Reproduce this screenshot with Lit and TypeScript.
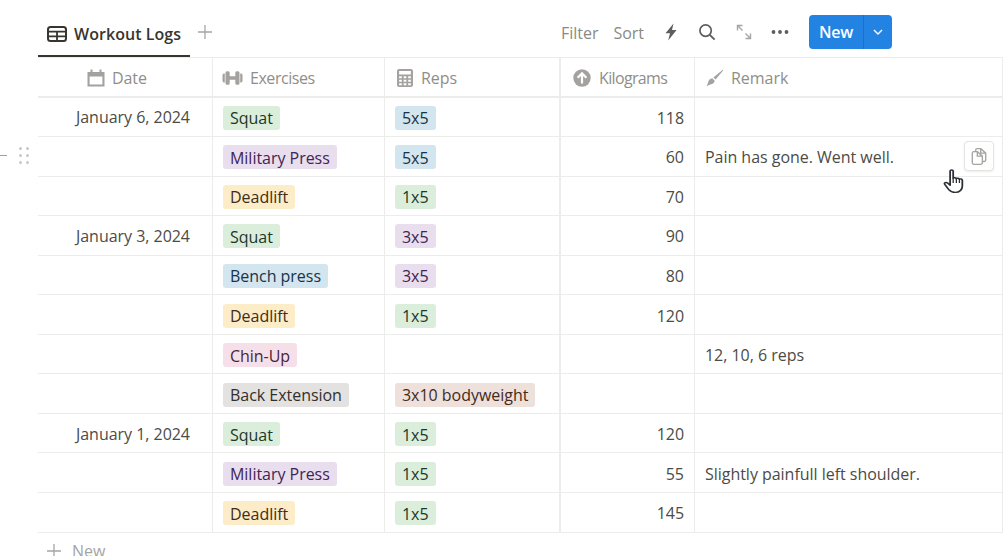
import { LitElement, html, css, svg } from "lit";
import { customElement } from "lit/decorators.js";

type Tag = [string, string];
const G = "green", P = "purple", Y = "yellow", B = "blue", K = "pink", R = "gray", N = "brown";
const rows: [string, Tag, Tag | null, string, string][] = [
  ["January 6, 2024", ["Squat", G], ["5x5", B], "118", ""],
  ["", ["Military Press", P], ["5x5", B], "60", "Pain has gone. Went well."],
  ["", ["Deadlift", Y], ["1x5", G], "70", ""],
  ["January 3, 2024", ["Squat", G], ["3x5", P], "90", ""],
  ["", ["Bench press", B], ["3x5", P], "80", ""],
  ["", ["Deadlift", Y], ["1x5", G], "120", ""],
  ["", ["Chin-Up", K], null, "", "12, 10, 6 reps"],
  ["", ["Back Extension", R], ["3x10 bodyweight", N], "", ""],
  ["January 1, 2024", ["Squat", G], ["1x5", G], "120", ""],
  ["", ["Military Press", P], ["1x5", G], "55", "Slightly painfull left shoulder."],
  ["", ["Deadlift", Y], ["1x5", G], "145", ""],
];

const icons = {
  table: svg`<svg class="ic tabic" viewBox="0 0 20 16"><rect x="1" y="1" width="18" height="14" rx="2.5" fill="none" stroke="currentColor" stroke-width="2"/><path d="M1 5.6H19M1 10.4H19M10 5.6V15" fill="none" stroke="currentColor" stroke-width="1.8"/></svg>`,
  plus: svg`<svg class="ic" width="16" height="16" viewBox="0 0 16 16"><path d="M8 1V15M1 8H15" stroke="currentColor" stroke-width="1.3" fill="none"/></svg>`,
  bolt: svg`<svg class="ic" width="14" height="18" viewBox="0 0 14 18"><path d="M9.5 0.5 1.5 10.2H6L4.2 17.5 12.6 7H8Z" fill="currentColor"/></svg>`,
  search: svg`<svg class="ic" width="18" height="18" viewBox="0 0 18 18"><circle cx="7.6" cy="7.6" r="5.7" fill="none" stroke="currentColor" stroke-width="1.7"/><path d="M11.8 11.8 16.6 16.6" stroke="currentColor" stroke-width="1.9" fill="none"/></svg>`,
  expand: svg`<svg class="ic" width="16" height="16" viewBox="0 0 16 16"><path d="M1.5 6.5V1.5H6.5M1.5 1.5 6.5 6.5M14.5 9.5V14.5H9.5M14.5 14.5 9.5 9.5" stroke="currentColor" stroke-width="1.4" fill="none"/></svg>`,
  more: svg`<svg class="ic" width="18" height="6" viewBox="0 0 18 6"><circle cx="2.5" cy="3" r="1.9" fill="currentColor"/><circle cx="9" cy="3" r="1.9" fill="currentColor"/><circle cx="15.5" cy="3" r="1.9" fill="currentColor"/></svg>`,
  chevron: svg`<svg class="ic" width="10" height="6" viewBox="0 0 10 6"><path d="M1 1 5 5 9 1" stroke="currentColor" stroke-width="1.4" fill="none"/></svg>`,
  calendar: svg`<svg class="ic" width="18" height="18" viewBox="0 0 18 18"><path fill-rule="evenodd" d="M0.5 3H3.5V0.5H5.5V3H12.5V0.5H14.5V3H17.5V17.5H0.5ZM2.6 7.6V15.4H15.4V7.6Z" fill="currentColor"/></svg>`,
  dumbbell: svg`<svg class="ic" width="21" height="16" viewBox="0 0 21 14" preserveAspectRatio="none"><path d="M0.5 4.5Q0.5 3 1.8 3H2.8V11H1.8Q0.5 11 0.5 9.5ZM3.5 2.5Q3.5 1 5 1H6.2Q7.7 1 7.7 2.5V5.4H13.3V2.5Q13.3 1 14.8 1H16Q17.5 1 17.5 2.5V11.5Q17.5 13 16 13H14.8Q13.3 13 13.3 11.5V8.6H7.7V11.5Q7.7 13 6.2 13H5Q3.5 13 3.5 11.5ZM18.2 3H19.2Q20.5 3 20.5 4.5V9.5Q20.5 11 19.2 11H18.2Z" fill="currentColor"/></svg>`,
  calc: svg`<svg class="ic" width="16" height="18" viewBox="0 0 15 18" preserveAspectRatio="none"><path fill-rule="evenodd" d="M2 0H13Q15 0 15 2V16Q15 18 13 18H2Q0 18 0 16V2Q0 0 2 0ZM2 2V5.5H13V2ZM2 7.2V9.2H4.5V7.2ZM6.2 7.2V9.2H8.8V7.2ZM10.5 7.2V9.2H13V7.2ZM2 10.7V12.7H4.5V10.7ZM6.2 10.7V12.7H8.8V10.7ZM10.5 10.7V12.7H13V10.7ZM2 14.2V16.2H4.5V14.2ZM6.2 14.2V16.2H8.8V14.2ZM10.5 14.2V16.2H13V14.2Z" fill="currentColor"/></svg>`,
  up: svg`<svg class="ic" width="18" height="18" viewBox="0 0 18 18"><circle cx="9" cy="9" r="8.7" fill="currentColor"/><path d="M9 14.5V4.5M4.6 8.8 9 4.4 13.4 8.8" stroke="#fff" stroke-width="2.2" fill="none"/></svg>`,
  brush: svg`<svg class="ic" width="18" height="18" viewBox="0 0 18 18"><path d="M16.8 0.8 17.3 1.3 9.6 10.6 7.4 8.4ZM6.3 9.3 8.7 11.7Q8.3 14.6 5.2 15.2 3 15.7 0.8 17.2 1.5 15.2 2.1 13.3 3 9.8 6.3 9.3Z" fill="currentColor"/></svg>`,
  copy: svg`<svg class="ic" width="18" height="19" viewBox="0 0 16 17"><path d="M5 4V2.8Q5 1.5 6.3 1.5H9.7L14 5.5V11.7Q14 13 12.7 13H11.5M2 5.5Q2 4.2 3.3 4.2H6.7L11 8.2V14.2Q11 15.5 9.7 15.5H3.3Q2 15.5 2 14.2ZM6.5 4.2V8.2H11M9.5 1.5V5.5H14" stroke="currentColor" stroke-width="1.2" fill="none"/></svg>`,
  hand: svg`<svg class="hand" width="21" height="25" viewBox="0 0 16.5 25" preserveAspectRatio="none"><path d="M5.6 2.1C5.6 0.6 8 0.6 8 2.1V9.4C8.3 8.4 10.3 8.4 10.5 9.8 10.8 8.9 12.7 9 12.9 10.4 13.3 9.6 15.2 9.8 15.2 11.4V17C15.2 20.4 13.2 23.4 9.6 23.4 6.8 23.4 5.5 22 4.4 20.3L1.4 15.4C0.6 14 2.3 12.7 3.6 14L5.6 16.2Z" fill="#fff" stroke="#2b2f36" stroke-width="1.4" stroke-linejoin="round"/><path d="M8 9.4V14M10.5 9.8V14M12.9 10.4V14" stroke="#2b2f36" stroke-width="1" fill="none"/></svg>`,
};

const head = [
  ["Date", icons.calendar, "date"],
  ["Exercises", icons.dumbbell, "ex"],
  ["Reps", icons.calc, "reps"],
  ["Kilograms", icons.up, "kg"],
  ["Remark", icons.brush, "rem"],
] as const;

@customElement("app-root")
export class AppRoot extends LitElement {
  static styles = css`
    :host {
      display: block;
      width: 1005px;
      height: 556px;
      overflow: hidden;
      position: relative;
      background: #fff;
      font-family: "Open Sans", "Noto Sans", sans-serif;
      font-size: 16px;
      color: #37352f;
      letter-spacing: -0.03px;
    }
    .ic { display: block; flex: none; }
    .tabs {
      height: 57px;
      margin-left: 38px;
      display: flex;
      align-items: flex-end;
      box-sizing: border-box;
    }
    .tab {
      width: 152px;
      height: 47px;
      box-sizing: border-box;
      border-bottom: 2px solid #37352f;
      display: flex;
      align-items: center;
      gap: 7px;
      padding: 2px 0 0 9px;
      font-weight: 600;
      font-size: 16px;
      letter-spacing: 0.05px;
      white-space: nowrap;
    }
    .tabic { width: 20px; height: 16px; }
    .add { color: #a5a5a2; margin: 0 0 16px 7px; padding-bottom: 1px; }
    .spacer { flex: 1; }
    .tools {
      display: flex;
      align-items: center;
      height: 34px;
      margin: 0 113px 8px 0;
      color: #8a8983;
    }
    .tool { display: flex; align-items: center; }
    .filter { margin-right: 15px; padding-top: 1px; }
    .sort { margin-right: 20px; padding-top: 1px; }
    .bolt { color: #5f5e5a; margin-right: 20px; }
    .search { color: #5f5e5a; margin-right: 20px; }
    .expand { color: #a6a5a1; margin-right: 19px; }
    .more { color: #5f5e5a; margin-right: 20px; }
    .new {
      display: flex;
      width: 83px;
      height: 34px;
      border-radius: 4px;
      background: #2383e2;
      color: #fff;
      font-weight: 600;
      letter-spacing: -0.3px;
      overflow: hidden;
    }
    .new span { display: flex; align-items: center; justify-content: center; }
    .new .label { width: 54px; border-right: 1px solid #1c6fc2; }
    .new .drop { flex: 1; }
    .table {
      margin-left: 38px;
      display: grid;
      grid-template-columns: 175px 172px 176px 134px 308px;
      grid-template-rows: 39.5px repeat(11, 39.55px);
      width: 965px;
      border-top: 1px solid #ececeb;
    }
    .c {
      box-sizing: border-box;
      border-right: 1px solid #ececeb;
      border-bottom: 1px solid #ececeb;
      display: flex;
      align-items: center;
      padding: 2px 9px 0 10px;
      white-space: nowrap;
      min-width: 0;
      color: #4c4b45;
    }
    .h { color: #8f8e89; gap: 8px; border-bottom-width: 2px; padding-top: 2px; padding-bottom: 0; }
    .h .ic { color: #a3a29e; }
    .h.date { justify-content: flex-end; padding-right: 65px; gap: 7px; }
    .h.ex { padding-left: 9px; gap: 7px; letter-spacing: -0.45px; }
    .h.reps { padding-left: 12px; gap: 8px; border-right-width: 2px; }
    .h.kg { padding-left: 12px; gap: 8px; letter-spacing: -0.65px; }
    .h.rem { padding-left: 11px; gap: 7px; }
    .date-c { justify-content: flex-end; padding-right: 22px; padding-top: 1px; }
    .num { justify-content: flex-end; padding-right: 10px; }
    .reps-c { border-right-width: 2px; }
    .tag {
      display: inline-flex;
      align-items: center;
      box-sizing: border-box;
      height: 24px;
      padding: 1px 7px 0;
      border-radius: 3px;
    }
    .green { background: #dbeddb; color: #1c3829; }
    .purple { background: #e8deee; color: #412454; }
    .yellow { background: #fdecc8; color: #402c1b; }
    .blue { background: #d3e5ef; color: #183347; }
    .pink { background: #f5e0e9; color: #4c2337; }
    .gray { background: #e3e2e0; color: #32302c; }
    .brown { background: #eee0da; color: #442a1e; }
    .addrow {
      margin-left: 46px;
      margin-top: 7px;
      display: flex;
      align-items: center;
      gap: 10px;
      color: #a5a5a2;
    }
    .copy {
      position: absolute;
      left: 964px;
      top: 141px;
      width: 30px;
      height: 30px;
      box-sizing: border-box;
      background: #fff;
      border: 1px solid #e4e4e2;
      border-radius: 4px;
      display: flex;
      align-items: center;
      justify-content: center;
      color: #a5a5a2;
      box-shadow: 0 1px 2px rgba(15, 15, 15, 0.08);
    }
    .hand { position: absolute; left: 943px; top: 169px; }
    .grip {
      position: absolute;
      left: 19px;
      top: 147px;
      width: 10px;
      height: 17px;
      display: grid;
      grid-template-columns: 3px 3px;
      grid-auto-rows: 3px;
      justify-content: space-between;
      align-content: space-between;
    }
    .grip i { background: #c8c8c5; border-radius: 50%; }
    .dash { position: absolute; left: 0; top: 155px; width: 7px; height: 1px; background: #9f9f9c; }
  `;

  render() {
    return html`
      <div class="tabs">
        <div class="tab">${icons.table}<span>Workout Logs</span></div>
        <div class="add">${icons.plus}</div>
        <div class="spacer"></div>
        <div class="tools">
          <span class="tool filter">Filter</span>
          <span class="tool sort">Sort</span>
          <span class="tool bolt">${icons.bolt}</span>
          <span class="tool search">${icons.search}</span>
          <span class="tool expand">${icons.expand}</span>
          <span class="tool more">${icons.more}</span>
          <div class="new"><span class="label">New</span><span class="drop">${icons.chevron}</span></div>
        </div>
      </div>
      <div class="table">
        ${head.map(([t, i, c]) => html`<div class="c h ${c}">${i}<span>${t}</span></div>`)}
        ${rows.map(
          ([d, e, r, k, m]) => html`
            <div class="c date-c">${d}</div>
            <div class="c"><span class="tag ${e[1]}">${e[0]}</span></div>
            <div class="c reps-c">${r ? html`<span class="tag ${r[1]}">${r[0]}</span>` : ""}</div>
            <div class="c num">${k}</div>
            <div class="c rem-c">${m}</div>
          `
        )}
      </div>
      <div class="addrow">${icons.plus}<span>New</span></div>
      <div class="dash"></div>
      <div class="grip">${[0, 1, 2, 3, 4, 5].map(() => html`<i></i>`)}</div>
      <div class="copy">${icons.copy}</div>
      ${icons.hand}
    `;
  }
}
